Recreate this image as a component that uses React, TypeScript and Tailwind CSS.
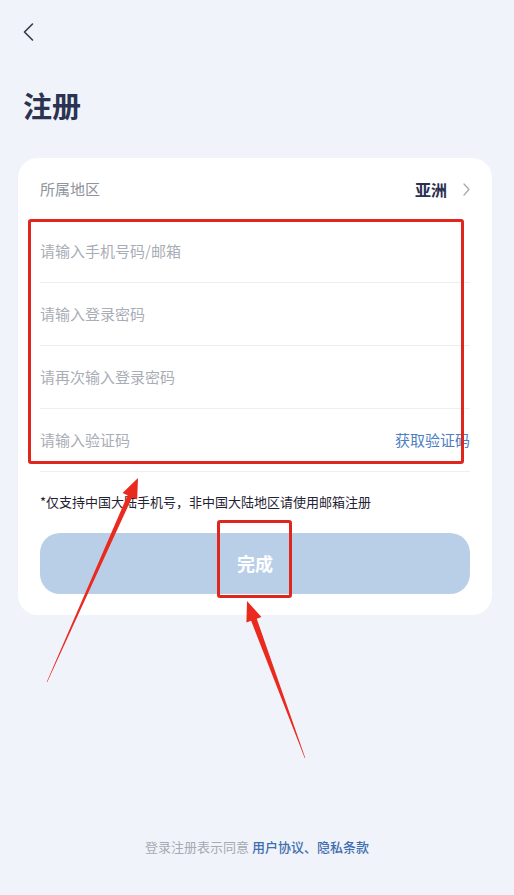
import React from "react";

const font = { fontFamily: '"Noto Sans CJK SC", "Noto Sans", sans-serif' };

function Field({ placeholder, action }: { placeholder: string; action?: string }) {
  return (
    <div className="flex h-[63px] items-center justify-between border-b border-[#eceef2]">
      <span className="text-[15px] text-[#a9adb6]">{placeholder}</span>
      {action && <span className="text-[15px] text-[#4f7fbf]">{action}</span>}
    </div>
  );
}

export default function App() {
  return (
    <div className="relative flex min-h-[895px] w-full flex-col bg-[#f0f3f9]" style={font}>
      {/* back */}
      <div className="pl-[23px] pt-[23px]">
        <svg width="11" height="18" viewBox="0 0 11 18" fill="none" stroke="#33384a" strokeWidth="1.6">
          <path d="M9.5 1 L1.5 9 L9.5 17" strokeLinecap="round" strokeLinejoin="round" />
        </svg>
      </div>

      <h1 className="mt-[46px] pl-[23px] text-[29px] font-bold leading-[36px] text-[#2b3352]">注册</h1>

      {/* card */}
      <div className="ml-[18px] mr-[22px] mt-[35px] rounded-[20px] bg-white px-[22px] pb-[21px]">
        <div className="flex h-[62px] items-center justify-between">
          <span className="text-[15px] text-[#8e939c]">所属地区</span>
          <div className="flex items-center gap-[16px]">
            <span className="text-[16px] font-bold text-[#2a3050]">亚洲</span>
            <svg width="7" height="13" viewBox="0 0 7 13" fill="none" stroke="#a3a7b0" strokeWidth="1.2">
              <path d="M1 1 L6 6.5 L1 12" strokeLinecap="round" strokeLinejoin="round" />
            </svg>
          </div>
        </div>
        <Field placeholder="请输入手机号码/邮箱" />
        <Field placeholder="请输入登录密码" />
        <Field placeholder="请再次输入登录密码" />
        <Field placeholder="请输入验证码" action="获取验证码" />

        <p className="mt-[20px] text-[13px] leading-[20px] text-[#1f2333]">
          *仅支持中国大陆手机号，非中国大陆地区请使用邮箱注册
        </p>

        <button
          type="button"
          className="mt-[21px] flex h-[61px] w-full items-center justify-center rounded-[20px] bg-[#b9cfe8] text-[18px] font-bold text-white"
        >
          完成
        </button>
      </div>

      {/* footer */}
      <div className="mt-auto pb-[38px] text-center text-[13px] leading-[20px]">
        <span className="text-[#a6aab3]">登录注册表示同意 </span>
        <span className="font-medium text-[#3f6eb0]">用户协议、隐私条款</span>
      </div>

      {/* annotations */}
      <div className="pointer-events-none absolute left-[28px] top-[219px] h-[245px] w-[436px] rounded-[3px] border-[3px] border-[#e0261c]" />
      <div className="pointer-events-none absolute left-[217px] top-[520px] h-[78px] w-[75px] rounded-[3px] border-[3px] border-[#e0261c]" />
      <svg className="pointer-events-none absolute left-0 top-0" width="514" height="895" viewBox="0 0 514 895">
        <polygon
          fill="#ea2a1e"
          points="138,478 137.16,499.52 132.14,497.28 47.27,682.12 46.73,681.88 127.58,495.24 122.56,493"
        />
        <polygon
          fill="#ea2a1e"
          points="247,601 261.43,616.99 256.74,618.72 305.28,757.9 304.72,758.1 251.12,620.8 246.43,622.53"
        />
      </svg>
    </div>
  );
}
